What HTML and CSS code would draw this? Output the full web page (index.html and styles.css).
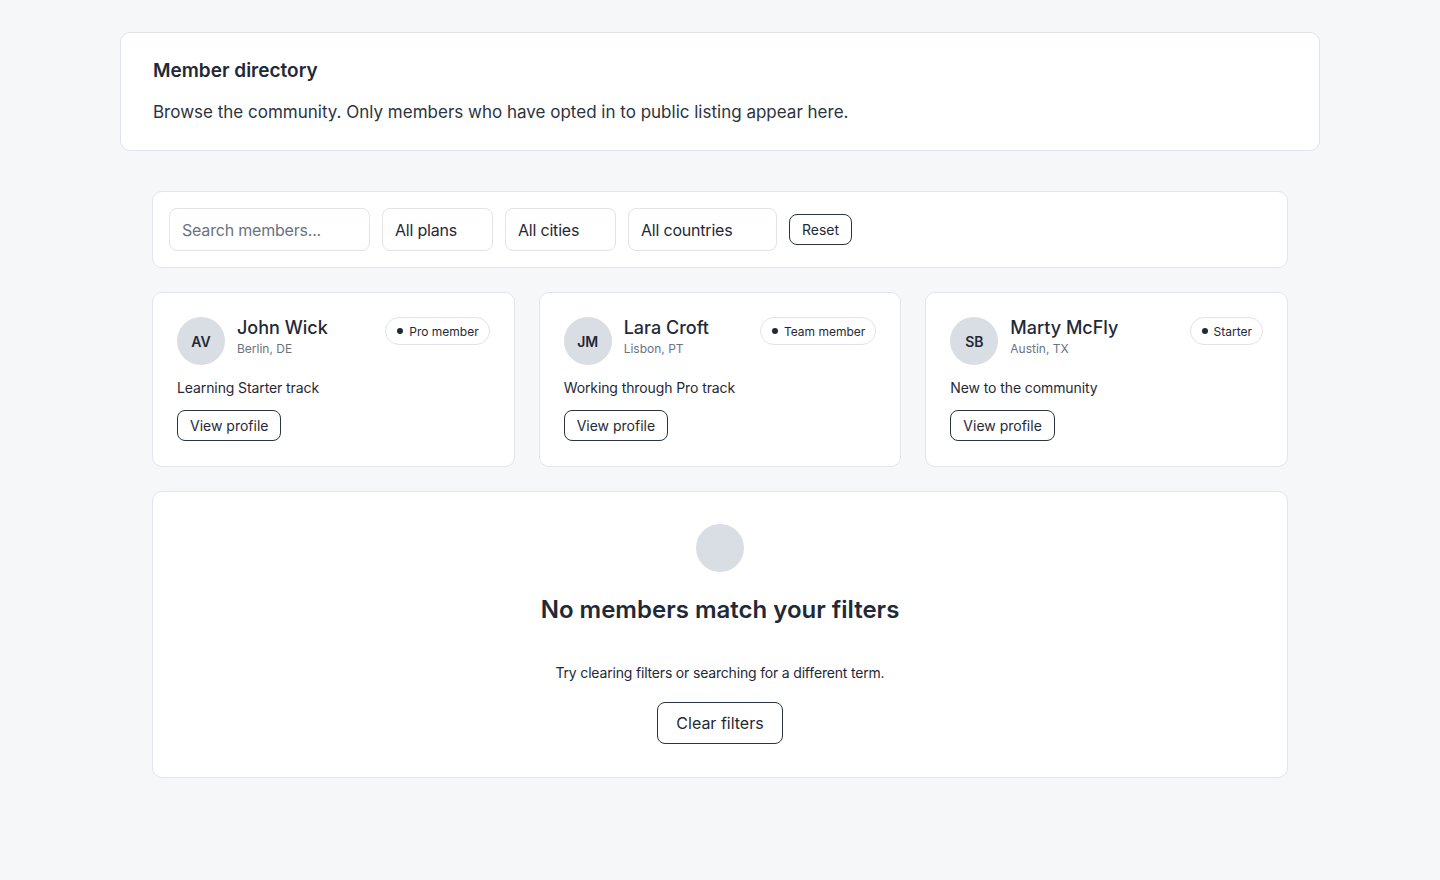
FILE: index.html
```html
<!DOCTYPE html>
<html lang="en">
<head>
  <meta charset="UTF-8" />
  <title>Member directory</title>
  <link rel="stylesheet" href="styles.css">
</head>
<body>

  <div class="page">
    <div class="intro">
      <h1>Member directory</h1>
      <p>Browse the community. Only members who have opted in to public listing appear here.</p>
    </div>

    <div class="content">
      <div class="filters">
        <input type="text" class="field search" placeholder="Search members..." />
        <div class="field plans">All plans</div>
        <div class="field cities">All cities</div>
        <div class="field countries">All countries</div>
        <button class="btn btn-small">Reset</button>
      </div>

      <div class="grid">
        <div class="member">
          <div class="member-head">
            <div class="avatar">AV</div>
            <div class="who">
              <div class="name">John Wick</div>
              <div class="place">Berlin, DE</div>
            </div>
            <span class="badge">Pro member</span>
          </div>
          <p class="note">Learning Starter track</p>
          <button class="btn">View profile</button>
        </div>

        <div class="member">
          <div class="member-head">
            <div class="avatar">JM</div>
            <div class="who">
              <div class="name">Lara Croft</div>
              <div class="place">Lisbon, PT</div>
            </div>
            <span class="badge">Team member</span>
          </div>
          <p class="note">Working through Pro track</p>
          <button class="btn">View profile</button>
        </div>

        <div class="member">
          <div class="member-head">
            <div class="avatar">SB</div>
            <div class="who">
              <div class="name">Marty McFly</div>
              <div class="place">Austin, TX</div>
            </div>
            <span class="badge">Starter</span>
          </div>
          <p class="note">New to the community</p>
          <button class="btn">View profile</button>
        </div>
      </div>

      <div class="empty">
        <div class="empty-icon"></div>
        <h2>No members match your filters</h2>
        <p>Try clearing filters or searching for a different term.</p>
        <button class="btn btn-large">Clear filters</button>
      </div>
    </div>
  </div>

</body>
</html>
```

FILE: styles.css
```css
* { box-sizing: border-box; }
body {
  font-family: Inter, "Noto Sans", sans-serif;
  background-color: #f6f7f9;
  color: #1f2937;
  margin: 0;
}
.page {
  max-width: 1200px;
  margin: 0 auto;
  padding-top: 32px;
}
.intro {
  background: white;
  border: 1px solid #dfe3e8;
  border-radius: 10px;
  padding: 26px 32px 25px;
}
.intro h1 {
  margin: 0 0 16px;
  font-size: 19px;
  font-weight: 600;
  line-height: 24px;
}
.intro p {
  margin: 0;
  font-size: 17px;
  line-height: 26px;
  color: #2b3440;
}
.content {
  padding: 40px 32px;
  display: flex;
  flex-direction: column;
  gap: 24px;
}
.filters {
  background: white;
  border: 1px solid #e2e5ea;
  border-radius: 10px;
  padding: 16px;
  display: flex;
  align-items: center;
  gap: 12px;
}
.field {
  height: 43px;
  border: 1px solid #e0e3e8;
  border-radius: 8px;
  padding: 0 12px;
  font-family: inherit;
  font-size: 16px;
  letter-spacing: -0.2px;
  color: #1f2937;
  background: white;
  display: flex;
  align-items: center;
}
.field::placeholder { color: #6b7280; }
.search { width: 201px; }
.plans { width: 111px; }
.cities { width: 111px; }
.countries { width: 149px; }
.btn {
  font-family: inherit;
  font-size: 14px;
  color: #1f2937;
  background: white;
  border: 1px solid #2b3440;
  border-radius: 8px;
  height: 31px;
  padding: 0 12px;
  cursor: pointer;
}
.btn-small { font-size: 14px; }
.btn-large {
  font-size: 16px;
  height: 42px;
  padding: 0 18px;
}
.grid {
  display: grid;
  grid-template-columns: repeat(3, 1fr);
  gap: 24px;
}
.member {
  background: white;
  border: 1px solid #e2e5ea;
  border-radius: 10px;
  padding: 24px 24px 25px;
}
.member-head {
  display: flex;
  align-items: flex-start;
  gap: 12px;
}
.avatar {
  width: 48px;
  height: 48px;
  border-radius: 50%;
  background: #d9dde4;
  display: flex;
  align-items: center;
  justify-content: center;
  font-size: 14px;
  font-weight: 600;
  color: #1f2937;
  flex: none;
}
.who { flex: 1; }
.name {
  font-size: 18px;
  font-weight: 500;
  line-height: 22px;
  margin-top: 0;
}
.place {
  font-size: 12px;
  color: #6b7280;
  margin-top: 2px;
}
.badge {
  border: 1px solid #e0e3e8;
  border-radius: 999px;
  height: 28px;
  padding: 0 10px 0 11px;
  font-size: 12px;
  display: flex;
  align-items: center;
  gap: 6px;
}
.badge::before {
  content: "";
  width: 6px;
  height: 6px;
  border-radius: 50%;
  background: #1f2937;
}
.note {
  margin: 14px 0 13px;
  font-size: 14px;
  line-height: 18px;
  letter-spacing: -0.1px;
}
.empty {
  background: white;
  border: 1px solid #e2e5ea;
  border-radius: 10px;
  padding: 32px 32px 33px;
  display: flex;
  flex-direction: column;
  align-items: center;
}
.empty-icon {
  width: 48px;
  height: 48px;
  border-radius: 50%;
  background: #d9dde4;
}
.empty h2 {
  margin: 23px 0 0;
  font-size: 24px;
  font-weight: 600;
  line-height: 30px;
}
.empty p {
  margin: 38px 0 19px;
  font-size: 14px;
  line-height: 20px;
  letter-spacing: -0.18px;
}
```
